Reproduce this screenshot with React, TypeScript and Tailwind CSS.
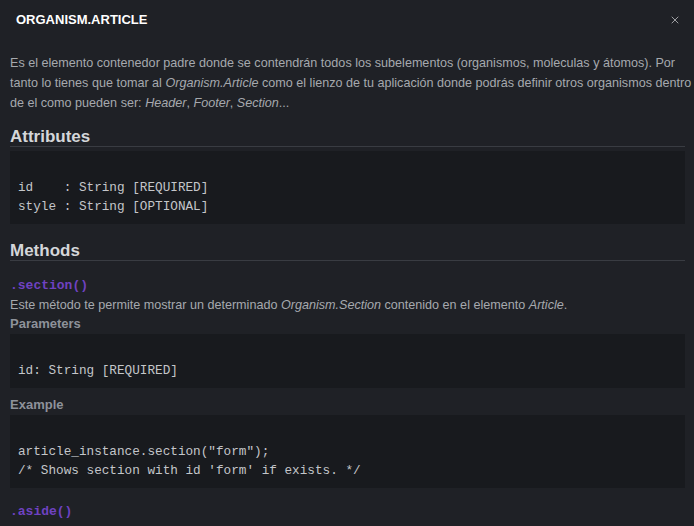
import { X } from 'lucide-react';

const mono = "font-['Liberation_Mono',monospace]";

function CodeBlock({ lines }: { lines: string[] }) {
  return (
    <pre className={`${mono} bg-[#181a1e] text-[#c4c6ca] text-[12.7px] leading-[19px] pl-2 pt-2 pb-2 whitespace-pre`}>
      {'\n' + lines.join('\n')}
    </pre>
  );
}

function Heading({ children }: { children: string }) {
  return (
    <h2 className="text-[17px] font-bold text-[#d4d6d9] leading-[18px] border-b border-[#393c42] mb-1">
      {children}
    </h2>
  );
}

function App() {
  return (
    <div className="w-[694px] h-[526px] overflow-hidden bg-[#1f2126] font-['Liberation_Sans',Arial,sans-serif] flex flex-col">
      <div className="h-10 shrink-0 flex items-center justify-between pl-4 pr-[13px]">
        <span className="text-white font-bold text-[13px]">ORGANISM.ARTICLE</span>
        <X className="w-3 h-3 text-[#c8c9cc]" strokeWidth={1.5} />
      </div>
      <div className="pl-[10px] pr-[9px]">
        <p className="text-[12.6px] leading-5 text-[#a6a9ae] mt-[13px] whitespace-nowrap">
          Es el elemento contenedor padre donde se contendrán todos los subelementos (organismos, moleculas y átomos). Por
          <br />
          tanto lo tienes que tomar al <i>Organism.Article</i> como el lienzo de tu aplicación donde podrás definir otros organismos dentro
          <br />
          de el como pueden ser: <i>Header</i>, <i>Footer</i>, <i>Section</i>...
        </p>
        <div className="mt-[15px]">
          <Heading>Attributes</Heading>
          <CodeBlock lines={['id    : String [REQUIRED]', 'style : String [OPTIONAL]']} />
        </div>
        <div className="mt-[18px]">
          <Heading>Methods</Heading>
          <div className={`${mono} text-[13px] font-bold text-[#6f42c1] mt-[15px] leading-5`}>.section()</div>
          <p className="text-[12.6px] leading-5 text-[#a6a9ae] -mt-[1px]">
            Este método te permite mostrar un determinado <i>Organism.Section</i> contenido en el elemento <i>Article</i>.
          </p>
          <div className="text-[13px] font-bold text-[#8e929a] leading-[18px]">Parameters</div>
          <div className="mt-[1px]">
            <CodeBlock lines={['id: String [REQUIRED]']} />
          </div>
          <div className="text-[13px] font-bold text-[#8e929a] leading-[18px] mt-2">Example</div>
          <div className="mt-[1px]">
            <CodeBlock lines={['article_instance.section("form");', "/* Shows section with id 'form' if exists. */"]} />
          </div>
          <div className={`${mono} text-[13px] font-bold text-[#6f42c1] mt-[14px] leading-5`}>.aside()</div>
        </div>
      </div>
    </div>
  );
}

export default App;
